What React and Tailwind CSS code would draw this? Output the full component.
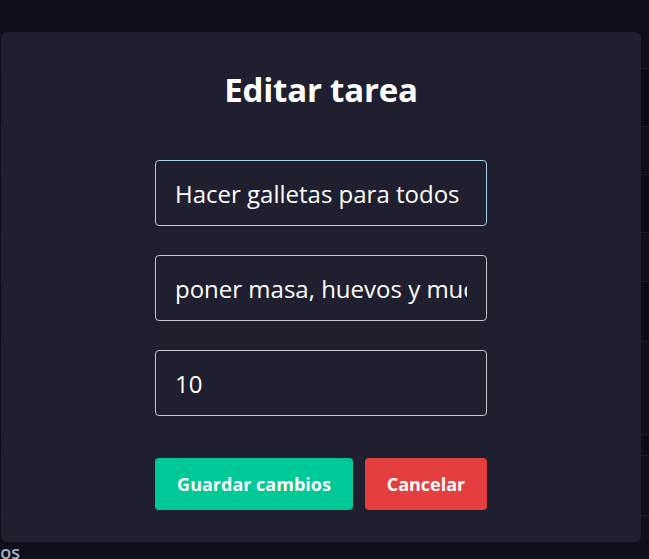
import { useState } from 'react';

const rows = [
  { h: 'h-[69px]', bg: 'bg-[#0d0f1b]' },
  { h: 'h-[58px]', bg: 'bg-[#090b15]' },
  { h: 'h-[48px]', bg: 'bg-[#0d0f1a]' },
  { h: 'h-[58px]', bg: 'bg-[#090b15]' },
  { h: 'h-[49px]', bg: 'bg-[#0d0f1a]' },
  { h: 'h-[60px]', bg: 'bg-[#090b15]' },
  { h: 'h-[93px]', bg: 'bg-[#0d0f1a]' },
  { h: 'h-[21px]', bg: 'bg-[#090b15]' },
  { h: 'h-[60px]', bg: 'bg-[#0d0f1a]' },
];

function EditModal() {
  const [title, setTitle] = useState('Hacer galletas para todos');
  const [desc, setDesc] = useState('poner masa, huevos y mucha azúcar');
  const [points, setPoints] = useState('10');

  const inputCls =
    'w-[332px] h-[66px] rounded-[4px] border bg-transparent px-[19px] text-[24px] text-white outline-none';

  return (
    <div className="absolute inset-0">
      <div className="ml-px mt-8 w-[640px] h-[510px] rounded-md bg-[#1f1f2f] flex flex-col items-center pt-[36px]">
        <h2 className="text-[33px] font-bold text-white leading-[44px] tracking-[-0.2px]">Editar tarea</h2>
        <div className="mt-[48px] flex flex-col gap-[29px]">
          <input
            className={inputCls + ' border-[#a9cfe6]'}
            value={title}
            onChange={(e) => setTitle(e.target.value)}
          />
          <input
            className={inputCls + ' border-[#c4c4cc]'}
            value={desc}
            onChange={(e) => setDesc(e.target.value)}
          />
          <input
            className={inputCls + ' border-[#c4c4cc]'}
            value={points}
            onChange={(e) => setPoints(e.target.value)}
          />
        </div>
        <div className="mt-[42px] flex gap-3">
          <button className="w-[198px] h-[52px] rounded-[4px] bg-[#00c896] text-white text-[18px] font-bold">
            Guardar cambios
          </button>
          <button className="w-[122px] h-[52px] rounded-[4px] bg-[#e53e3e] text-white text-[18px] font-bold">
            Cancelar
          </button>
        </div>
      </div>
    </div>
  );
}

export default function App() {
  return (
    <div
      className="relative w-[649px] h-[559px] overflow-hidden bg-[#0d0f1b]"
      style={{ fontFamily: '"Open Sans", "Noto Sans", sans-serif' }}
    >
      <div className="flex flex-col">
        {rows.map((r, i) => (
          <div key={i} className={`${r.h} ${r.bg} border-b border-[#1c1e2b]`} />
        ))}
      </div>
      <div className="absolute left-0 bottom-[-7px] -ml-[32px] text-[18px] font-semibold text-[#aab0c0]">Todos</div>
      <EditModal />
    </div>
  );
}
